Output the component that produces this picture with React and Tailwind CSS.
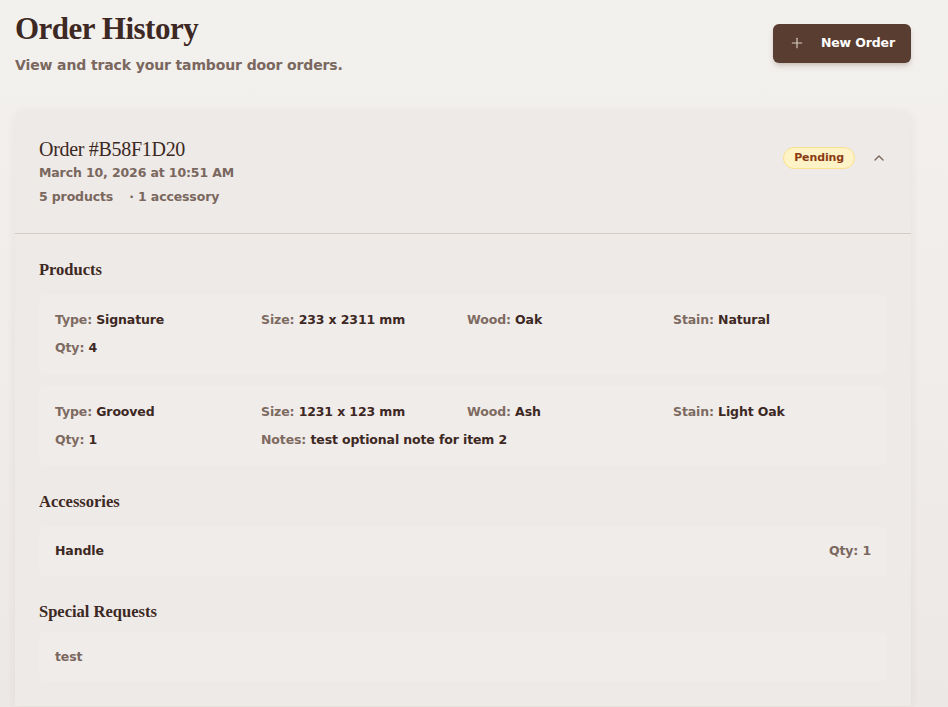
import React from "react";
import { Plus, ChevronUp } from "lucide-react";

const serif = { fontFamily: '"Liberation Serif", "DejaVu Serif", serif' };

const products = [
  {
    type: "Signature",
    size: "233 x 2311 mm",
    wood: "Oak",
    stain: "Natural",
    qty: 4,
  },
  {
    type: "Grooved",
    size: "1231 x 123 mm",
    wood: "Ash",
    stain: "Light Oak",
    qty: 1,
    notes: "test optional note for item 2",
  },
];

const Field = ({ label, value }) => (
  <div className="leading-5">
    <span className="text-[#7d6a60]">{label}: </span>
    <span className="text-[#3d2823]">{value}</span>
  </div>
);

const SectionTitle = ({ children, className = "mb-3" }) => (
  <h3
    className={`text-[16.5px] leading-6 tracking-normal text-[#3d2823] ${className}`}
    style={serif}
  >
    {children}
  </h3>
);

const App = () => {
  return (
    <div
      className="min-h-[707px] bg-gradient-to-b from-[#f3f1ee] to-[#ece8e5] pl-[15px] pt-[11px] font-bold text-[12.5px] tracking-[-0.01em]"
      style={{ fontFamily: '"DejaVu Sans", "Liberation Sans", sans-serif' }}
    >
      <div className="w-[896px]">
        <div className="flex items-center justify-between mb-9">
          <div>
            <h1
              className="text-[31px] leading-9 font-bold text-[#3d2823] tracking-[-0.5px]"
              style={serif}
            >
              Order History
            </h1>
            <p className="mt-2 text-[14px] leading-5 text-[#7a675e]">
              View and track your tambour door orders.
            </p>
          </div>
          <button className="flex items-center gap-4 h-[39px] px-4 rounded-md bg-[#5a3d31] text-white text-[12.5px] shadow-md shadow-[#5a3d31]/20">
            <Plus size={16} strokeWidth={1.75} className="text-[#d8ccc5]" />
            New Order
          </button>
        </div>

        <div className="rounded-t-lg bg-[#eeeae7] shadow-[0_2px_10px_rgba(90,61,49,0.07)]">
          <div className="flex items-start justify-between px-6 pt-6 pb-[26px] border-b border-[#d3cbc6]">
            <div>
              <h2
                className="text-[20px] leading-7 font-normal tracking-[-0.3px] text-[#3d2823]"
                style={serif}
              >
                Order #B58F1D20
              </h2>
              <p className="leading-5 text-[#7a675e]">
                March 10, 2026 at 10:51 AM
              </p>
              <div className="mt-1 flex gap-4 leading-5 text-[#7a675e]">
                <span>5 products</span>
                <span>· 1 accessory</span>
              </div>
            </div>
            <div className="flex items-center gap-4 mt-3">
              <span className="px-[10px] h-[22px] flex items-center rounded-full bg-[#fef3c7] border border-[#fbe08f] text-[#8a3a12] text-[11px]">
                Pending
              </span>
              <ChevronUp size={16} strokeWidth={2} className="text-[#7a675e]" />
            </div>
          </div>

          <div className="px-6 pt-6 pb-6 space-y-6">
            <section>
              <SectionTitle>Products</SectionTitle>
              <div className="space-y-3">
                {products.map((p, i) => (
                  <div
                    key={i}
                    className="rounded-md bg-[#f0ecea] p-4 grid grid-cols-4 gap-x-2 gap-y-2"
                  >
                    <Field label="Type" value={p.type} />
                    <Field label="Size" value={p.size} />
                    <Field label="Wood" value={p.wood} />
                    <Field label="Stain" value={p.stain} />
                    <Field label="Qty" value={p.qty} />
                    {p.notes && (
                      <div className="col-span-3">
                        <Field label="Notes" value={p.notes} />
                      </div>
                    )}
                  </div>
                ))}
              </div>
            </section>

            <section>
              <SectionTitle>Accessories</SectionTitle>
              <div className="rounded-md bg-[#f0ecea] px-4 py-[15px] flex justify-between leading-5">
                <span className="text-[#3d2823]">Handle</span>
                <span className="text-[#7a675e]">Qty: 1</span>
              </div>
            </section>

            <section>
              <SectionTitle className="mb-2">Special Requests</SectionTitle>
              <div className="rounded-md bg-[#f0ecea] px-4 py-[15px] leading-5 text-[#7a675e]">
                test
              </div>
            </section>
          </div>
        </div>
      </div>
    </div>
  );
};

export default App;
